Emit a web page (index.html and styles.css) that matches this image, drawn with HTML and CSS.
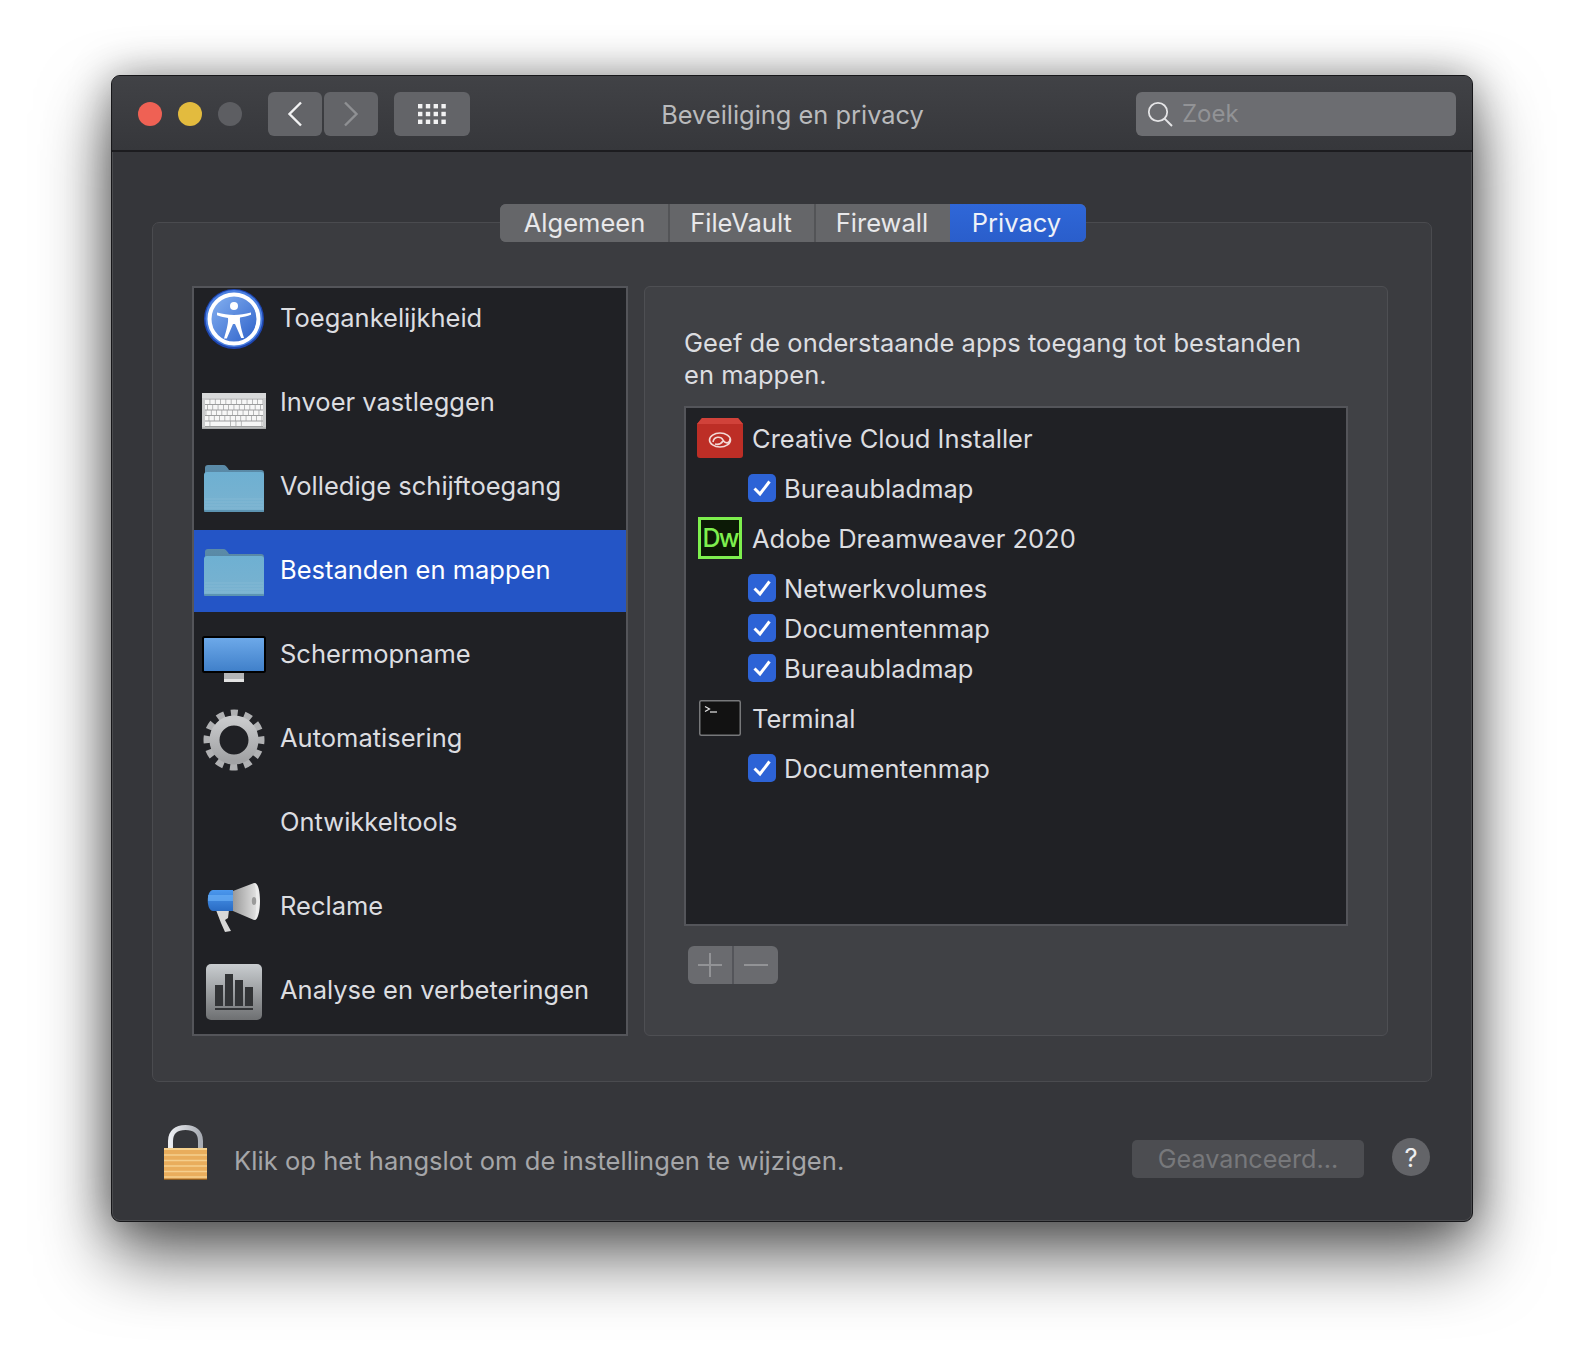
FILE: index.html
```html
<!DOCTYPE html>
<html lang="nl">
<head>
<meta charset="utf-8">
<title>Beveiliging en privacy</title>
<link rel="stylesheet" href="styles.css">
</head>
<body>
<svg class="defs" width="0" height="0" aria-hidden="true">
  <defs>
    <linearGradient id="folderBack" x1="0" y1="0" x2="0" y2="1"><stop offset="0" stop-color="#5b8ba8"/><stop offset="1" stop-color="#4f7f9c"/></linearGradient>
    <linearGradient id="folderFront" x1="0" y1="0" x2="0" y2="1"><stop offset="0" stop-color="#6eb0d2"/><stop offset="1" stop-color="#7ab2cf"/></linearGradient>
    <linearGradient id="screenGrad" x1="0" y1="0" x2="0" y2="1"><stop offset="0" stop-color="#6eaaea"/><stop offset="1" stop-color="#3f7fc9"/></linearGradient>
    <linearGradient id="a11yGrad" x1="0" y1="0" x2="1" y2="1"><stop offset="0" stop-color="#88b4f2"/><stop offset="1" stop-color="#2a5ec8"/></linearGradient>
    <linearGradient id="gearGrad" x1="0" y1="0" x2="0" y2="1"><stop offset="0" stop-color="#c8c9cb"/><stop offset="1" stop-color="#a2a3a5"/></linearGradient>
    <linearGradient id="chartGrad" x1="0" y1="0" x2="0" y2="1"><stop offset="0" stop-color="#c9cdd0"/><stop offset="1" stop-color="#6e7072"/></linearGradient>
    <linearGradient id="hornGrad" x1="0" y1="0" x2="1" y2="0"><stop offset="0" stop-color="#9a9a9a"/><stop offset="1" stop-color="#e4e4e4"/></linearGradient>
    <linearGradient id="blueGrad" x1="0" y1="0" x2="0" y2="1"><stop offset="0" stop-color="#4b98ee"/><stop offset="1" stop-color="#2a6cc4"/></linearGradient>
    <linearGradient id="shackleGrad" x1="0" y1="0" x2="1" y2="0"><stop offset="0" stop-color="#eceef2"/><stop offset="1" stop-color="#a9adb4"/></linearGradient>
    <symbol id="folder" viewBox="0 0 60 47">
      <path d="M1 47V3a3 3 0 0 1 3-3h15c3 0 4 2 6 5h32a3 3 0 0 1 3 3v39z" fill="url(#folderBack)"/>
      <rect y="7" width="60" height="40" rx="3" fill="url(#folderFront)"/>
      <path d="M1 34h58M1 37h58M1 40h58M1 43h58" stroke="#8dc0da" stroke-width="1" opacity=".55"/>
      <rect y="45" width="60" height="2" rx="1" fill="#5c94b2"/>
    </symbol>
  </defs>
</svg>
<main class="window">
  <header class="titlebar">
    <div class="toolbar-left">
      <div class="lights">
        <span class="light light-red"></span>
        <span class="light light-yellow"></span>
        <span class="light light-gray"></span>
      </div>
      <div class="nav">
        <button class="tool-btn nav-btn"><svg width="16" height="26" viewBox="0 0 16 26"><path d="M14 1.5 2.5 13 14 24.5" fill="none" stroke="#f2f2f3" stroke-width="2.4"/></svg></button>
        <button class="tool-btn nav-btn"><svg width="16" height="26" viewBox="0 0 16 26"><path d="M2 1.5 13.5 13 2 24.5" fill="none" stroke="#8f9093" stroke-width="2.4"/></svg></button>
      </div>
      <button class="tool-btn grid-btn">
        <svg width="28" height="20" viewBox="0 0 28 20" fill="#f2f2f3">
          <rect width="4.4" height="4.4"/><rect x="7.8" width="4.4" height="4.4"/><rect x="15.6" width="4.4" height="4.4"/><rect x="23.4" width="4.4" height="4.4"/>
          <rect y="7.8" width="4.4" height="4.4"/><rect x="7.8" y="7.8" width="4.4" height="4.4"/><rect x="15.6" y="7.8" width="4.4" height="4.4"/><rect x="23.4" y="7.8" width="4.4" height="4.4"/>
          <rect y="15.6" width="4.4" height="4.4"/><rect x="7.8" y="15.6" width="4.4" height="4.4"/><rect x="15.6" y="15.6" width="4.4" height="4.4"/><rect x="23.4" y="15.6" width="4.4" height="4.4"/>
        </svg>
      </button>
    </div>
    <h1 class="title">Beveiliging en privacy</h1>
    <div class="toolbar-right">
      <div class="search">
        <svg class="search-icon" width="26" height="26" viewBox="0 0 26 26"><circle cx="11" cy="11" r="9.2" fill="none" stroke="#e4e4e6" stroke-width="1.8"/><path d="M17.6 17.6 25 25" stroke="#e4e4e6" stroke-width="2"/></svg>
        <span class="search-text">Zoek</span>
      </div>
    </div>
  </header>

  <section class="content">
    <nav class="tabs">
      <span class="tab tab-1">Algemeen</span>
      <span class="tab tab-2">FileVault</span>
      <span class="tab tab-3">Firewall</span>
      <span class="tab tab-4 tab-active">Privacy</span>
    </nav>
    <div class="group">
      <div class="sidebar">
        <ul class="side-list">
          <li class="side-row">
            <span class="side-icon icon-first">
              <svg width="60" height="60" viewBox="0 0 60 60"><circle cx="30" cy="30" r="30" fill="#1d45b0"/><circle cx="30" cy="29.5" r="28.5" fill="#4a7fe0"/><circle cx="30" cy="30" r="24.5" fill="url(#a11yGrad)" stroke="#fff" stroke-width="4"/><circle cx="30" cy="17" r="4" fill="#fff"/><path d="M13 23.5c6 1.500 11 2.500 17 2.500s11-1 17-2.500v2.200c-4 1.500-7.500 2.300-11 2.800-.5 4 .8 10 4 20.500h-2.800L31 35h-2l-6.200 14.500H20c3.200-10.500 4.500-16.500 4-20.500-3.500-.5-7-1.300-11-2.800z" fill="#fff"/></svg>
            </span>
            <span>Toegankelijkheid</span>
          </li>
          <li class="side-row">
            <span class="side-icon icon-kbd">
              <svg width="64" height="36" viewBox="0 0 64 36"><rect width="64" height="36" fill="#c9cacb"/><rect width="64" height="5" fill="#d8d9da"/><rect x="3" y="6" width="58" height="28" fill="#9c9d9e"/><g fill="none" stroke="#f7f7f7" stroke-width="4.600"><path d="M3 8.700h58" stroke-dasharray="4.600 .7"/><path d="M3 14.200h58" stroke-dasharray="4.600 .7" stroke-dashoffset="2.500"/><path d="M3 19.700h58" stroke-dasharray="4.600 .7" stroke-dashoffset="4"/><path d="M3 25.200h58" stroke-dasharray="4.600 .7" stroke-dashoffset="1"/><path d="M3 30.700h58" stroke-dasharray="4.600 .7 20 .7 4.600 .7" stroke-dashoffset="0"/></g><rect x="0" y="34.500" width="64" height="1.500" fill="#a8a9aa"/></svg>
            </span>
            <span>Invoer vastleggen</span>
          </li>
          <li class="side-row">
            <span class="side-icon"><svg width="60" height="47"><use href="#folder"/></svg></span>
            <span>Volledige schijftoegang</span>
          </li>
          <li class="side-row side-active">
            <span class="side-icon"><svg width="60" height="47"><use href="#folder"/></svg></span>
            <span>Bestanden en mappen</span>
          </li>
          <li class="side-row">
            <span class="side-icon icon-screen">
              <svg width="64" height="46" viewBox="0 0 64 46"><rect x="22" y="36" width="20" height="7" fill="#b5b6b7"/><rect x="22" y="43" width="20" height="3" fill="#e3e3e3"/><rect x="1" y="1" width="62" height="35" rx="1.500" fill="url(#screenGrad)" stroke="#000" stroke-width="2"/></svg>
            </span>
            <span>Schermopname</span>
          </li>
          <li class="side-row">
            <span class="side-icon">
              <svg width="62" height="62" viewBox="0 0 62 62"><circle cx="31" cy="31" r="27" fill="none" stroke="#b0b1b3" stroke-width="7" stroke-dasharray="7.600 6.537" stroke-dashoffset="3.800" transform="rotate(-90 31 31)"/><circle cx="31" cy="31" r="19.500" fill="none" stroke="url(#gearGrad)" stroke-width="10"/></svg>
            </span>
            <span>Automatisering</span>
          </li>
          <li class="side-row">
            <span class="side-icon"></span>
            <span>Ontwikkeltools</span>
          </li>
          <li class="side-row">
            <span class="side-icon">
              <svg width="56" height="50" viewBox="0 0 56 50"><path d="M10 27h13l-1 8-3 2 6 11-6 1-4-9z" fill="#d8d8d8"/><path d="M7 7h20v21H7C0 28 0 7 7 7z" fill="url(#blueGrad)"/><path d="M2 12h25v6H2z" fill="#68aef5" opacity=".7"/><path d="M27 8 48 0c4 0 5 37 0 37L27 28z" fill="url(#hornGrad)"/><path d="M48 0c4-1 6 8 6 18s-2 20-6 19c3-3 3-33 0-37z" fill="#ececec"/><ellipse cx="48" cy="18" rx="2.200" ry="4" fill="#9a9a9a"/></svg>
            </span>
            <span>Reclame</span>
          </li>
          <li class="side-row">
            <span class="side-icon">
              <svg width="56" height="56" viewBox="0 0 56 56"><rect width="56" height="56" rx="5" fill="url(#chartGrad)"/><g fill="#323436"><rect x="9" y="21" width="8" height="21"/><rect x="19" y="10" width="8" height="32"/><rect x="29" y="16" width="8" height="26"/><rect x="39" y="23" width="8" height="19"/><rect x="9" y="44" width="38" height="2"/></g></svg>
            </span>
            <span>Analyse en verbeteringen</span>
          </li>
        </ul>
      </div>

      <div class="panel">
        <p class="panel-text">Geef de onderstaande apps toegang tot bestanden<br>en mappen.</p>
        <div class="app-table">
          <div class="app-row">
            <span class="app-icon">
              <svg width="46" height="40" viewBox="0 0 46 40"><path d="M0 6 5 0h36l5 6v31a3 3 0 0 1-3 3H3a3 3 0 0 1-3-3z" fill="#bd2e26"/><path d="M5 0h36l5 6H0z" fill="#d1423a"/><g fill="none" stroke="#f3d9d6" stroke-width="1.600"><ellipse cx="23" cy="22" rx="10.500" ry="7"/><path d="M16 24c1-6 8-6 10-2s7 4 7-1M18 26c3 1 6 0 8-3"/></g></svg>
            </span>
            <span>Creative Cloud Installer</span>
          </div>
          <div class="perm-row"><span class="check"><svg width="20" height="18" viewBox="0 0 20 18"><path d="M2.500 9.500 8 15 17.500 2.500" fill="none" stroke="#fff" stroke-width="3"/></svg></span><span>Bureaubladmap</span></div>
          <div class="app-row">
            <span class="app-icon"><span class="dw">Dw</span></span>
            <span>Adobe Dreamweaver 2020</span>
          </div>
          <div class="perm-row"><span class="check"><svg width="20" height="18" viewBox="0 0 20 18"><path d="M2.500 9.500 8 15 17.500 2.500" fill="none" stroke="#fff" stroke-width="3"/></svg></span><span>Netwerkvolumes</span></div>
          <div class="perm-row"><span class="check"><svg width="20" height="18" viewBox="0 0 20 18"><path d="M2.500 9.500 8 15 17.500 2.500" fill="none" stroke="#fff" stroke-width="3"/></svg></span><span>Documentenmap</span></div>
          <div class="perm-row"><span class="check"><svg width="20" height="18" viewBox="0 0 20 18"><path d="M2.500 9.500 8 15 17.500 2.500" fill="none" stroke="#fff" stroke-width="3"/></svg></span><span>Bureaubladmap</span></div>
          <div class="app-row">
            <span class="app-icon">
              <svg width="42" height="36" viewBox="0 0 42 36"><rect x=".75" y=".75" width="40.500" height="34.500" rx="1.500" fill="#121212" stroke="#77787a" stroke-width="1.500"/><path d="M6 6.500 10.500 9 6 11.500" fill="none" stroke="#e6e6e6" stroke-width="1.200"/><path d="M11 12h7" stroke="#e6e6e6" stroke-width="1.200"/></svg>
            </span>
            <span>Terminal</span>
          </div>
          <div class="perm-row"><span class="check"><svg width="20" height="18" viewBox="0 0 20 18"><path d="M2.500 9.500 8 15 17.500 2.500" fill="none" stroke="#fff" stroke-width="3"/></svg></span><span>Documentenmap</span></div>
        </div>
        <div class="plusminus">
          <span class="pm-btn"><svg width="24" height="24" viewBox="0 0 24 24"><path d="M0 12h24M12 0v24" stroke="#929396" stroke-width="2"/></svg></span>
          <span class="pm-btn"><svg width="24" height="24" viewBox="0 0 24 24"><path d="M0 12h24" stroke="#929396" stroke-width="2"/></svg></span>
        </div>
      </div>
    </div>

    <footer class="footer">
      <svg class="lock" width="44" height="55" viewBox="0 0 44 55"><path d="M6.500 24V16C6.500 7 12.500 2.500 21.500 2.500S36.500 7 36.500 16v8" fill="none" stroke="url(#shackleGrad)" stroke-width="5"/><rect y="23" width="43" height="32" rx="1.500" fill="#e9ad5c"/><path d="M0 24h43" stroke="#f7d28e" stroke-width="2"/><path d="M0 30h43M0 35.500h43M0 41h43M0 46.500h43M0 52h43" stroke="#f5cf8d" stroke-width="1.600"/><path d="M0 54.500h43" stroke="#8a5a20" stroke-width="1.500"/></svg>
      <span class="footer-text">Klik op het hangslot om de instellingen te wijzigen.</span>
      <span class="advanced">Geavanceerd...</span>
      <span class="help">?</span>
    </footer>
  </section>
</main>
</body>
</html>
```

FILE: styles.css
```css
* { box-sizing: border-box; }
html, body { margin: 0; padding: 0; }
body {
  background: #fff;
  width: 1584px;
  height: 1370px;
  overflow: hidden;
  font-family: "Inter", "Liberation Sans", sans-serif;
  font-size: 25.500px;
  color: #dcdde0;
}
.defs { display: block; height: 0; }

.window {
  margin: 75px 0 0 111px;
  width: 1362px;
  height: 1147px;
  display: flex;
  flex-direction: column;
  background: #35363a;
  border: 1px solid #17171a;
  border-radius: 9px;
  box-shadow: inset 0 0 0 1px #4a4b4e, 0 34px 70px rgba(0, 0, 0, .62), 0 0 40px rgba(0, 0, 0, .34);
  overflow: hidden;
}

.titlebar {
  height: 76px;
  flex: none;
  display: grid;
  grid-template-columns: 1fr auto 1fr;
  align-items: center;
  background: linear-gradient(#414246, #36373b);
  border-bottom: 2px solid #1c1c1f;
  padding: 1px 16px 0 26px;
}
.toolbar-left { display: flex; align-items: center; }
.lights { display: flex; gap: 16px; margin-right: 26px; }
.light { width: 24px; height: 24px; border-radius: 50%; }
.light-red { background: #ef6154; }
.light-yellow { background: #e3bb3e; }
.light-gray { background: #5d5e62; }
.nav { display: flex; gap: 2px; margin-right: 16px; }
.tool-btn {
  height: 44px;
  padding: 0;
  border: 0;
  border-radius: 6px;
  background: #636468;
  display: flex;
  align-items: center;
  justify-content: center;
}
.nav-btn { width: 54px; }
.grid-btn { width: 76px; }

.title {
  margin: 2px 9px 0 0;
  font-size: 25.400px;
  font-weight: 400;
  color: #b9babc;
}
.toolbar-right { display: flex; justify-content: flex-end; }
.search {
  width: 320px;
  height: 44px;
  border-radius: 6px;
  background: #6c6d71;
  display: flex;
  align-items: center;
  padding-left: 11px;
}
.search-icon { margin-right: 9px; }
.search-text { color: #929396; font-size: 24px; }

.content {
  flex: 1;
  display: flex;
  flex-direction: column;
  padding: 52px 40px 0 40px;
  min-height: 0;
}
.tabs {
  display: flex;
  height: 38px;
  margin: 0 0 -20px 348px;
  align-self: flex-start;
  position: relative;
  z-index: 1;
  border-radius: 6px;
  overflow: hidden;
  background: #636468;
}
.tab {
  display: flex;
  align-items: center;
  justify-content: center;
  color: #e8e8ea;
  background: #656669;
  padding-bottom: 2px;
}
.tab-1 { width: 170px; border-right: 2px solid #535457; padding-left: 1px; }
.tab-2 { width: 146px; border-right: 2px solid #535457; padding-right: 2px; }
.tab-3 { width: 134px; padding-right: 2px; }
.tab-4 { width: 136px; padding-right: 3px; }
.tab-active { background: linear-gradient(#2f67d8, #2a5ecb); color: #eef1f8; }

.group {
  height: 860px;
  flex: none;
  display: flex;
  gap: 16px;
  padding: 63px 44px 0 39px;
  background: #3b3c40;
  border: 1px solid #4a4b4f;
  border-radius: 7px;
}

.sidebar {
  width: 436px;
  height: 750px;
  flex: none;
  background: #202125;
  border: 2px solid #54555a;
  overflow: hidden;
}
.side-list {
  list-style: none;
  margin: -10px 0 0;
  padding: 0;
}
.side-row {
  height: 82px;
  margin-bottom: 2px;
  display: flex;
  align-items: center;
  gap: 14px;
  padding-left: 8px;
  color: #dcdde0;
  line-height: 1;
}
.side-row > span:last-child { padding-bottom: 2px; }
.side-active { background: #2455c6; color: #fff; }
.side-icon {
  width: 64px;
  height: 64px;
  flex: none;
  display: flex;
  align-items: center;
  justify-content: center;
  padding-top: 2px;
}
.side-icon.icon-first { padding-top: 0; }
.side-icon.icon-kbd { padding-top: 16px; }
.side-icon.icon-screen { padding-top: 8px; }

.panel {
  width: 744px;
  height: 750px;
  flex: none;
  padding: 40px 0 0 39px;
  background: #404145;
  border: 1px solid #4e4f53;
  border-radius: 6px;
}
.panel-text {
  margin: 0 0 15px;
  line-height: 32px;
  letter-spacing: .04px;
  color: #dcdde0;
}
.app-table {
  width: 664px;
  height: 520px;
  background: #202125;
  border: 2px solid #54555a;
  padding-top: 10px;
}
.app-row {
  height: 40px;
  margin: 10px 0;
  display: flex;
  align-items: center;
  gap: 9px;
  padding-left: 11px;
}
.app-row:first-child { margin-top: 0; }
.app-icon {
  width: 46px;
  height: 40px;
  flex: none;
  display: flex;
  align-items: center;
  justify-content: center;
}
.dw {
  width: 44px;
  height: 42px;
  flex: none;
  display: flex;
  align-items: center;
  justify-content: center;
  background: #0c1a06;
  border: 3px solid #7ef04e;
  color: #7ef04e;
  font-size: 25px;
  font-weight: 500;
  letter-spacing: -2px;
  line-height: 1;
}
.perm-row {
  height: 40px;
  display: flex;
  align-items: center;
  gap: 8px;
  padding-left: 62px;
}
.check {
  width: 28px;
  height: 28px;
  flex: none;
  display: flex;
  align-items: center;
  justify-content: center;
  border-radius: 5px;
  background: #2d63d6;
}

.plusminus {
  width: 90px;
  height: 38px;
  margin: 20px 0 0 4px;
  display: flex;
  border-radius: 6px;
  overflow: hidden;
  background: #6a6b6f;
}
.pm-btn {
  flex: 1;
  display: flex;
  align-items: center;
  justify-content: center;
}
.pm-btn:first-child { border-right: 2px solid #54555a; }

.footer {
  flex: 1;
  display: flex;
  align-items: flex-start;
  padding: 0 0 0 12px;
  color: #a5a6a9;
}
.lock { flex: none; margin: 43px 26px 0 0; }
.footer-text { width: 898px; flex: none; margin-top: 63px; letter-spacing: .05px; }
.advanced {
  width: 232px;
  height: 38px;
  flex: none;
  display: flex;
  align-items: center;
  justify-content: center;
  border-radius: 5px;
  background: #4c4d51;
  color: #77787b;
  margin-top: 58px;
  font-size: 25.200px;
}
.help {
  width: 38px;
  height: 38px;
  flex: none;
  margin: 56px 0 0 28px;
  display: flex;
  align-items: center;
  justify-content: center;
  border-radius: 50%;
  background: #636468;
  color: #eeeeef;
}
```
